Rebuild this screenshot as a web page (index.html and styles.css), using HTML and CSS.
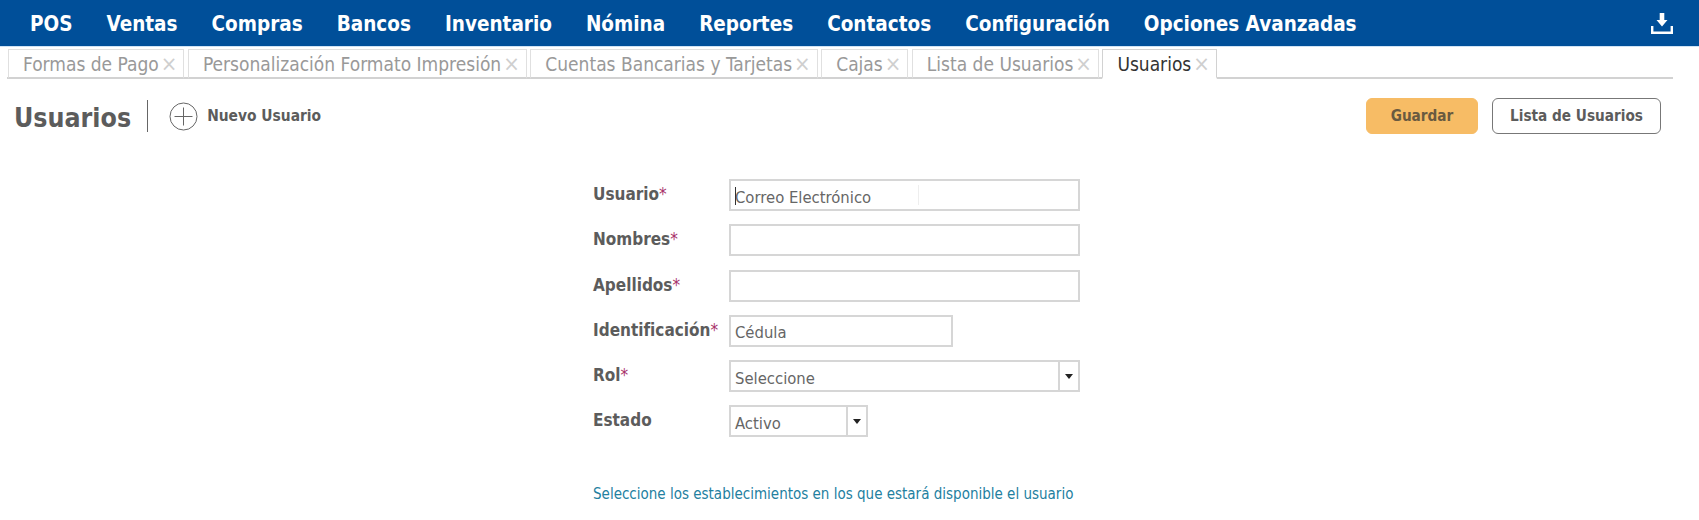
FILE: index.html
```html
<!DOCTYPE html>
<html lang="es">
<head>
<meta charset="utf-8">
<title>Usuarios</title>
<link rel="stylesheet" href="styles.css">
</head>
<body>
<header class="nav">
  <a class="nav-item">POS</a>
  <a class="nav-item">Ventas</a>
  <a class="nav-item">Compras</a>
  <a class="nav-item">Bancos</a>
  <a class="nav-item">Inventario</a>
  <a class="nav-item">Nómina</a>
  <a class="nav-item">Reportes</a>
  <a class="nav-item">Contactos</a>
  <a class="nav-item">Configuración</a>
  <a class="nav-item">Opciones Avanzadas</a>
  <svg class="nav-download" width="22" height="21" viewBox="0 0 22 21">
    <path fill="#fff" d="M8.700 0h4.600v7h3.200L11 13.500 5.500 7h3.200z"/>
    <path fill="none" stroke="#fff" stroke-width="2.400" d="M1.200 13v6.800h19.600V13"/>
  </svg>
</header>
<nav class="tabs">
  <div class="tab">Formas de Pago<span class="tab-x">×</span></div>
  <div class="tab">Personalización Formato Impresión<span class="tab-x">×</span></div>
  <div class="tab">Cuentas Bancarias y Tarjetas<span class="tab-x">×</span></div>
  <div class="tab">Cajas<span class="tab-x">×</span></div>
  <div class="tab">Lista de Usuarios<span class="tab-x">×</span></div>
  <div class="tab tab-active">Usuarios<span class="tab-x">×</span></div>
</nav>
<section class="toolbar">
  <h1 class="title">Usuarios</h1>
  <div class="divider"></div>
  <svg class="add-icon" width="29" height="29" viewBox="0 0 29 29" fill="none" stroke="#666" stroke-width="1">
    <circle cx="14.500" cy="14.500" r="13.500"/>
    <path d="M14.500 5.500v18M5.500 14.500h18"/>
  </svg>
  <span class="add-label">Nuevo Usuario</span>
  <div class="toolbar-actions">
    <button class="btn btn-save">Guardar</button>
    <button class="btn btn-list">Lista de Usuarios</button>
  </div>
</section>
<main class="form">
  <div class="row">
    <label class="label">Usuario<span class="req">*</span></label>
    <div class="field field-full">
      <span class="value">Correo Electrónico</span>
      <span class="caret"></span>
      <span class="ghost-cursor"></span>
    </div>
  </div>
  <div class="row">
    <label class="label">Nombres<span class="req">*</span></label>
    <div class="field field-full"></div>
  </div>
  <div class="row">
    <label class="label">Apellidos<span class="req">*</span></label>
    <div class="field field-full"></div>
  </div>
  <div class="row">
    <label class="label">Identificación<span class="req">*</span></label>
    <div class="field field-id"><span class="value">Cédula</span></div>
  </div>
  <div class="row">
    <label class="label">Rol<span class="req">*</span></label>
    <div class="field field-full">
      <span class="value value-grow">Seleccione</span>
      <span class="arrow-box"><span class="arrow"></span></span>
    </div>
  </div>
  <div class="row">
    <label class="label">Estado</label>
    <div class="field field-state">
      <span class="value value-grow">Activo</span>
      <span class="arrow-box"><span class="arrow"></span></span>
    </div>
  </div>
  <p class="hint">Seleccione los establecimientos en los que estará disponible el usuario</p>
</main>
</body>
</html>
```
FILE: styles.css
```css
* { box-sizing: border-box; }
html, body { margin: 0; height: 520px; overflow: hidden; }
body {
  background: #fff;
  font-family: "DejaVu Sans", "Open Sans", sans-serif;
  font-stretch: condensed;
  color: #555;
}
.nav {
  height: 47px;
  background: #004f99;
  display: flex;
  align-items: center;
  padding: 0 26px 0 30px;
  gap: 34px;
  border-bottom: 1px solid #cfe3f5;
}
.nav-item { color: #fff; font-size: 20.500px; font-weight: 700; line-height: 46px; position: relative; top: 1px; }
.nav-download { margin-left: auto; }
.tabs {
  display: flex;
  gap: 3.500px;
  margin: 2px 26px 0 7px;
  padding-left: 1px;
  height: 30px;
  border-bottom: 2px solid #d2d2d2;
}
.tab {
  height: 30px;
  padding: 0 6px 0 14px;
  border: 1px solid #e0e0e0;
  border-bottom: 2px solid #d2d2d2;
  font-size: 19px;
  line-height: 28px;
  color: #999;
  white-space: nowrap;
}
.tab-x { color: #cfcfcf; font-size: 22px; line-height: 20px; margin-left: 2px; }
.tab-active {
  color: #333;
  border-color: #d2d2d2;
  border-bottom-color: #fff;
}
.toolbar {
  display: flex;
  align-items: center;
  height: 36px;
  margin-top: 19px;
  padding: 0 38px 0 14px;
}
.title { margin: 0; font-size: 26.500px; font-weight: 700; color: #5c5c5c; position: relative; top: 1px; }
.divider { width: 1px; height: 32px; background: #666; margin: 0 21px 0 16px; }
.add-icon { margin-right: 9px; }
.add-label { font-size: 15.400px; font-weight: 700; color: #5c5c5c; }
.toolbar-actions { margin-left: auto; display: flex; gap: 14px; }
.btn {
  height: 36px;
  font: 700 15.200px "DejaVu Sans", sans-serif;
  font-stretch: condensed;
  border-radius: 6px;
  padding: 0;
}
.btn-save { width: 112px; background: #f7bc65; border: 1px solid #f7bc65; color: #6a5a40; }
.btn-list { width: 169px; background: #fff; border: 1px solid #777; color: #5c5c5c; }
.form { margin: 45px 0 0 593px; width: 500px; }
.row { display: flex; align-items: flex-start; height: 45.300px; }
.label {
  width: 136px;
  flex: none;
  font-size: 17px;
  font-weight: 700;
  line-height: 31px;
  color: #5c5c5c;
}
.req { color: #a8326a; font-weight: 400; }
.field {
  position: relative;
  display: flex;
  align-items: center;
  height: 32px;
  border: 2px solid #d6d6d6;
  background: #fff;
  font-size: 16.500px;
  color: #666;
}
.field-full { width: 351px; }
.field-id { width: 224px; }
.field-state { width: 139px; }
.value { padding: 4px 0 0 4px; }
.value-grow { flex: 1; }
.caret {
  position: absolute;
  left: 4px;
  top: 6px;
  width: 1px;
  height: 18px;
  background: #333;
}
.ghost-cursor {
  position: absolute;
  left: 187px;
  top: 4px;
  width: 1px;
  height: 20px;
  background: #eee;
}
.arrow-box {
  width: 20px;
  height: 100%;
  border-left: 2px solid #d6d6d6;
  display: flex;
  align-items: center;
  justify-content: center;
}
.arrow {
  width: 0;
  height: 0;
  border-left: 4.500px solid transparent;
  border-right: 4.500px solid transparent;
  border-top: 5px solid #222;
}
.hint { margin: 34px 0 0; font-size: 15px; color: #23809f; white-space: nowrap; }
```
